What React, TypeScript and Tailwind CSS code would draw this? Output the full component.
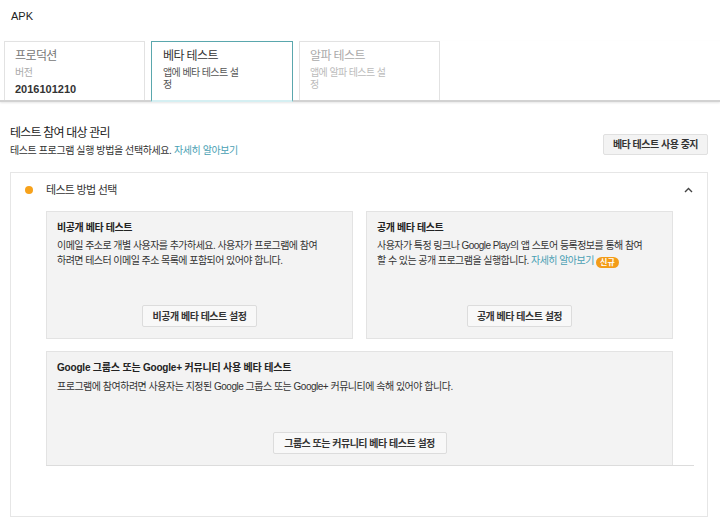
import type { ReactNode } from "react";

const FONT = "font-['Liberation_Sans','Noto_Sans_CJK_KR',sans-serif]";

interface TabProps {
  title: string;
  active?: boolean;
  muted?: boolean;
  children: ReactNode;
}

function Tab({ title, active, muted, children }: TabProps) {
  if (active) {
    return (
      <div className="-mb-[2px] h-[61px] w-[142px] border border-b-2 border-[#5aa7ad] border-b-[#d5eff2] bg-white px-[11px] pt-[7px]">
        <div className="text-[12px] leading-[14px] tracking-[-0.6px] text-[#333]">{title}</div>
        {children}
      </div>
    );
  }

  return (
    <div className="h-[59px] w-[141px] border border-b-0 border-[#e2e2e2] bg-white px-[10px] pt-[7px]">
      <div className={`text-[12px] leading-[14px] tracking-[-0.6px] ${muted ? "text-[#aaa]" : "text-[#777]"}`}>{title}</div>
      {children}
    </div>
  );
}

function GrayButton({ label, className = "" }: { label: string; className?: string }) {
  return (
    <button
      type="button"
      className={`h-[22px] whitespace-nowrap rounded-[2px] border border-[#dcdcdc] bg-[#f8f8f8] px-0 text-[10px] font-bold tracking-[-0.5px] text-[#333] ${className}`}
    >
      {label}
    </button>
  );
}

function Link({ children }: { children: ReactNode }) {
  return <span className="text-[#4a9fb4]">{children}</span>;
}

export default function App() {
  return (
    <div className={`h-[528px] w-[720px] overflow-hidden bg-white ${FONT} text-[#333]`}>
      <div className="h-[41px] pl-[11px] pt-[10px] text-[11px] leading-[12px] text-[#222]">APK</div>

      <div className="flex h-[61px] items-start gap-[6px] border-b-2 border-[#d2d2d2] pl-[4px] shadow-[0_1px_2px_rgba(0,0,0,0.1)]">
        <Tab title="프로덕션">
          <div className="mt-[4px] text-[10px] leading-[12px] tracking-[-0.5px] text-[#aaa]">버전</div>
          <div className="mt-[3px] text-[11px] font-bold leading-[14px] text-[#333]">2016101210</div>
        </Tab>
        <Tab title="베타 테스트" active>
          <div className="mt-[4px] text-[10px] leading-[12px] tracking-[-0.6px] text-[#555]">
            앱에 베타 테스트 설<br />정
          </div>
        </Tab>
        <Tab title="알파 테스트" muted>
          <div className="mt-[4px] text-[10px] leading-[12px] tracking-[-0.6px] text-[#bbb]">
            앱에 알파 테스트 설<br />정
          </div>
        </Tab>
      </div>

      <div className="flex items-start justify-between pl-[10px] pr-[12px] pt-[24px]">
        <div>
          <div className="text-[12px] leading-[14px] tracking-[-0.8px] text-[#222]">테스트 참여 대상 관리</div>
          <div className="mt-[5px] text-[10px] leading-[12px] tracking-[-0.4px] text-[#333]">
            테스트 프로그램 실행 방법을 선택하세요. <Link>자세히 알아보기</Link>
          </div>
        </div>
        <button
          type="button"
          className="mt-[8px] h-[21px] w-[105px] whitespace-nowrap rounded-[2px] border border-[#e0e0e0] bg-[#f3f3f3] text-[10px] font-bold tracking-[-0.5px] text-[#333]"
        >
          베타 테스트 사용 중지
        </button>
      </div>

      <div className="ml-[10px] mt-[15px] h-[345px] w-[698px] border border-[#e6e6e6]">
        <div className="flex h-[34px] items-center pl-[14px] pr-[14px]">
          <span className="h-[8px] w-[8px] rounded-full bg-[#f7a21b]" />
          <span className="ml-[13px] text-[11px] tracking-[-0.7px] text-[#333]">테스트 방법 선택</span>
          <svg className="ml-auto" width="9" height="6" viewBox="0 0 9 6" fill="none">
            <path d="M1 5 L4.5 1.5 L8 5" stroke="#444" strokeWidth="1.4" />
          </svg>
        </div>

        <div className="mt-[4px] pl-[35px]">
          <div className="flex gap-[13px]">
            <div className="flex h-[128px] w-[307px] flex-col border border-[#e3e3e3] bg-[#f3f3f3] px-[10px] pb-[11px] pt-[10px]">
              <div className="text-[10px] font-bold leading-[12px] tracking-[-0.4px] text-[#222]">비공개 베타 테스트</div>
              <div className="mt-[4px] text-[10px] leading-[15px] tracking-[-0.55px] text-[#333]">
                이메일 주소로 개별 사용자를 추가하세요. 사용자가 프로그램에 참여
                <br />
                하려면 테스터 이메일 주소 목록에 포함되어 있어야 합니다.
              </div>
              <GrayButton label="비공개 베타 테스트 설정" className="mx-auto mt-auto w-[115px]" />
            </div>

            <div className="flex h-[128px] w-[307px] flex-col border border-[#e3e3e3] bg-[#f3f3f3] px-[10px] pb-[11px] pt-[10px]">
              <div className="text-[10px] font-bold leading-[12px] tracking-[-0.4px] text-[#222]">공개 베타 테스트</div>
              <div className="mt-[4px] text-[10px] leading-[15px] tracking-[-0.55px] text-[#333]">
                사용자가 특정 링크나 Google Play의 앱 스토어 등록정보를 통해 참여
                <br />
                할 수 있는 공개 프로그램을 실행합니다. <Link>자세히 알아보기</Link>{" "}
                <span className="inline-block h-[11px] rounded-full bg-[#f39c18] px-[4px] align-[-1px] text-[8px] font-bold leading-[11px] tracking-normal text-white">
                  신규
                </span>
              </div>
              <GrayButton label="공개 베타 테스트 설정" className="mx-auto mt-auto w-[105px]" />
            </div>
          </div>

          <div className="mt-[12px] w-[648px] border-b border-[#dcdcdc]">
            <div className="flex h-[114px] w-[627px] flex-col border border-b-0 border-[#e3e3e3] bg-[#f3f3f3] px-[10px] pb-[11px] pt-[10px]">
              <div className="text-[10px] font-bold leading-[12px] tracking-[-0.2px] text-[#222]">
                Google 그룹스 또는 Google+ 커뮤니티 사용 베타 테스트
              </div>
              <div className="mt-[5px] text-[10px] leading-[15px] tracking-[-0.5px] text-[#333]">
                프로그램에 참여하려면 사용자는 지정된 Google 그룹스 또는 Google+ 커뮤니티에 속해 있어야 합니다.
              </div>
              <GrayButton label="그룹스 또는 커뮤니티 베타 테스트 설정" className="mx-auto mt-auto w-[174px]" />
            </div>
          </div>
        </div>
      </div>
    </div>
  );
}
